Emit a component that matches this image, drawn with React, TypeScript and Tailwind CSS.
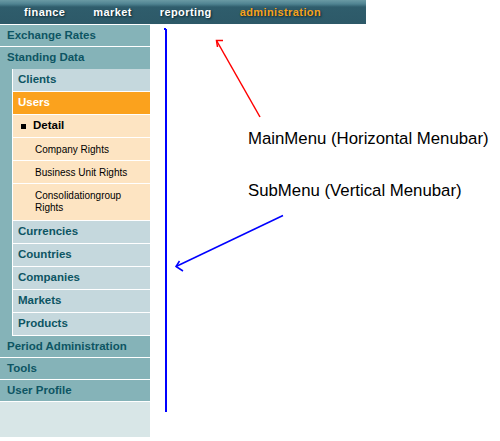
import React from 'react';

const topMenu = [
  { label: 'finance', active: false },
  { label: 'market', active: false },
  { label: 'reporting', active: false },
  { label: 'administration', active: true },
];

const subItems = ['Currencies', 'Countries', 'Companies', 'Markets', 'Products'];
const rights = ['Company Rights', 'Business Unit Rights'];
const bottomItems = ['Period Administration', 'Tools', 'User Profile'];

const TopRow: React.FC<{ label: string }> = ({ label }) => (
  <div className="h-[22px] border-b border-white bg-[#85b3b8] pl-[7px] flex items-center text-[11.5px] font-bold text-[#0d5563]">
    {label}
  </div>
);

const SubRow: React.FC<{ label: string }> = ({ label }) => (
  <div className="h-[23px] border-b border-white bg-[#c5d8dd] pl-[5px] flex items-center text-[11.5px] font-bold text-[#0d5563]">
    {label}
  </div>
);

const App: React.FC = () => {
  return (
    <div className="relative w-[500px] h-[441px] bg-white overflow-hidden font-['Liberation_Sans',Arial,sans-serif]">
      {/* main menu */}
      <div className="w-[366px] h-[24px] bg-[linear-gradient(#6a9aa4_0,#4f8391_4px,#2f5d6c_7px,#2d5968_100%)] flex items-center pl-[24px] gap-[28px]">
        {topMenu.map((m) => (
          <span
            key={m.label}
            className={`text-[11px] font-bold tracking-[0.4px] [text-shadow:1px_1px_2px_#0b2630] ${m.active ? 'text-[#f7a21c]' : 'text-white'}`}
          >
            {m.label}
          </span>
        ))}
      </div>

      {/* sub menu */}
      <div className="w-[150px] border-t border-white">
        <TopRow label="Exchange Rates" />
        <div className="h-[22px] bg-[#85b3b8] pl-[7px] flex items-center text-[11.5px] font-bold text-[#0d5563]">
          Standing Data
        </div>
        <div className="bg-[#85b3b8] pl-[12px]">
          <div className="border-l border-white">
            <SubRow label="Clients" />
            <div className="h-[23px] border-b border-white bg-[#fba21d] pl-[5px] flex items-center text-[11.5px] font-bold text-white">
              Users
            </div>
            <div className="h-[23px] border-b border-white bg-[#fde4c2] pl-[8px] flex items-center gap-[7px] text-[11.5px] font-bold text-black">
              <span className="w-[5px] h-[5px] bg-black" />
              Detail
            </div>
            {rights.map((r) => (
              <div key={r} className="h-[23px] border-b border-white bg-[#fde4c2] pl-[22px] flex items-center text-[10px] text-black">
                {r}
              </div>
            ))}
            <div className="h-[37px] border-b border-white bg-[#fde4c2] pl-[22px] pr-[4px] flex items-center text-[10px] leading-[12.5px] text-black">
              Consolidationgroup Rights
            </div>
            {subItems.map((s) => (
              <SubRow key={s} label={s} />
            ))}
          </div>
        </div>
        {bottomItems.map((b) => (
          <TopRow key={b} label={b} />
        ))}
        <div className="h-[35px] bg-[#d8e6e7]" />
      </div>

      {/* annotations */}
      <svg className="absolute left-0 top-0 pointer-events-none" width="500" height="441" viewBox="0 0 500 441">
        <rect x="164" y="28" width="2" height="2" fill="#0000ff" />
        <line x1="166" y1="29" x2="166" y2="412" stroke="#0000ff" strokeWidth="2" />
        <g stroke="#ff0000" strokeWidth="1.5" fill="none">
          <line x1="260" y1="117" x2="216.5" y2="40.5" />
          <polyline points="223,40.5 216.5,40.5 217.5,47" />
        </g>
        <g stroke="#0000ff" strokeWidth="1.5" fill="none">
          <line x1="283" y1="215.5" x2="176" y2="266.5" />
          <polyline points="179.5,261 176,266.5 183,271" />
        </g>
      </svg>
      <div className="absolute left-[248px] top-[131px] text-[16.8px] leading-[16.5px] text-black">
        MainMenu (Horizontal Menubar)
      </div>
      <div className="absolute left-[248px] top-[183px] text-[16.8px] leading-[16.5px] text-black">
        SubMenu (Vertical Menubar)
      </div>
    </div>
  );
};

export default App;
